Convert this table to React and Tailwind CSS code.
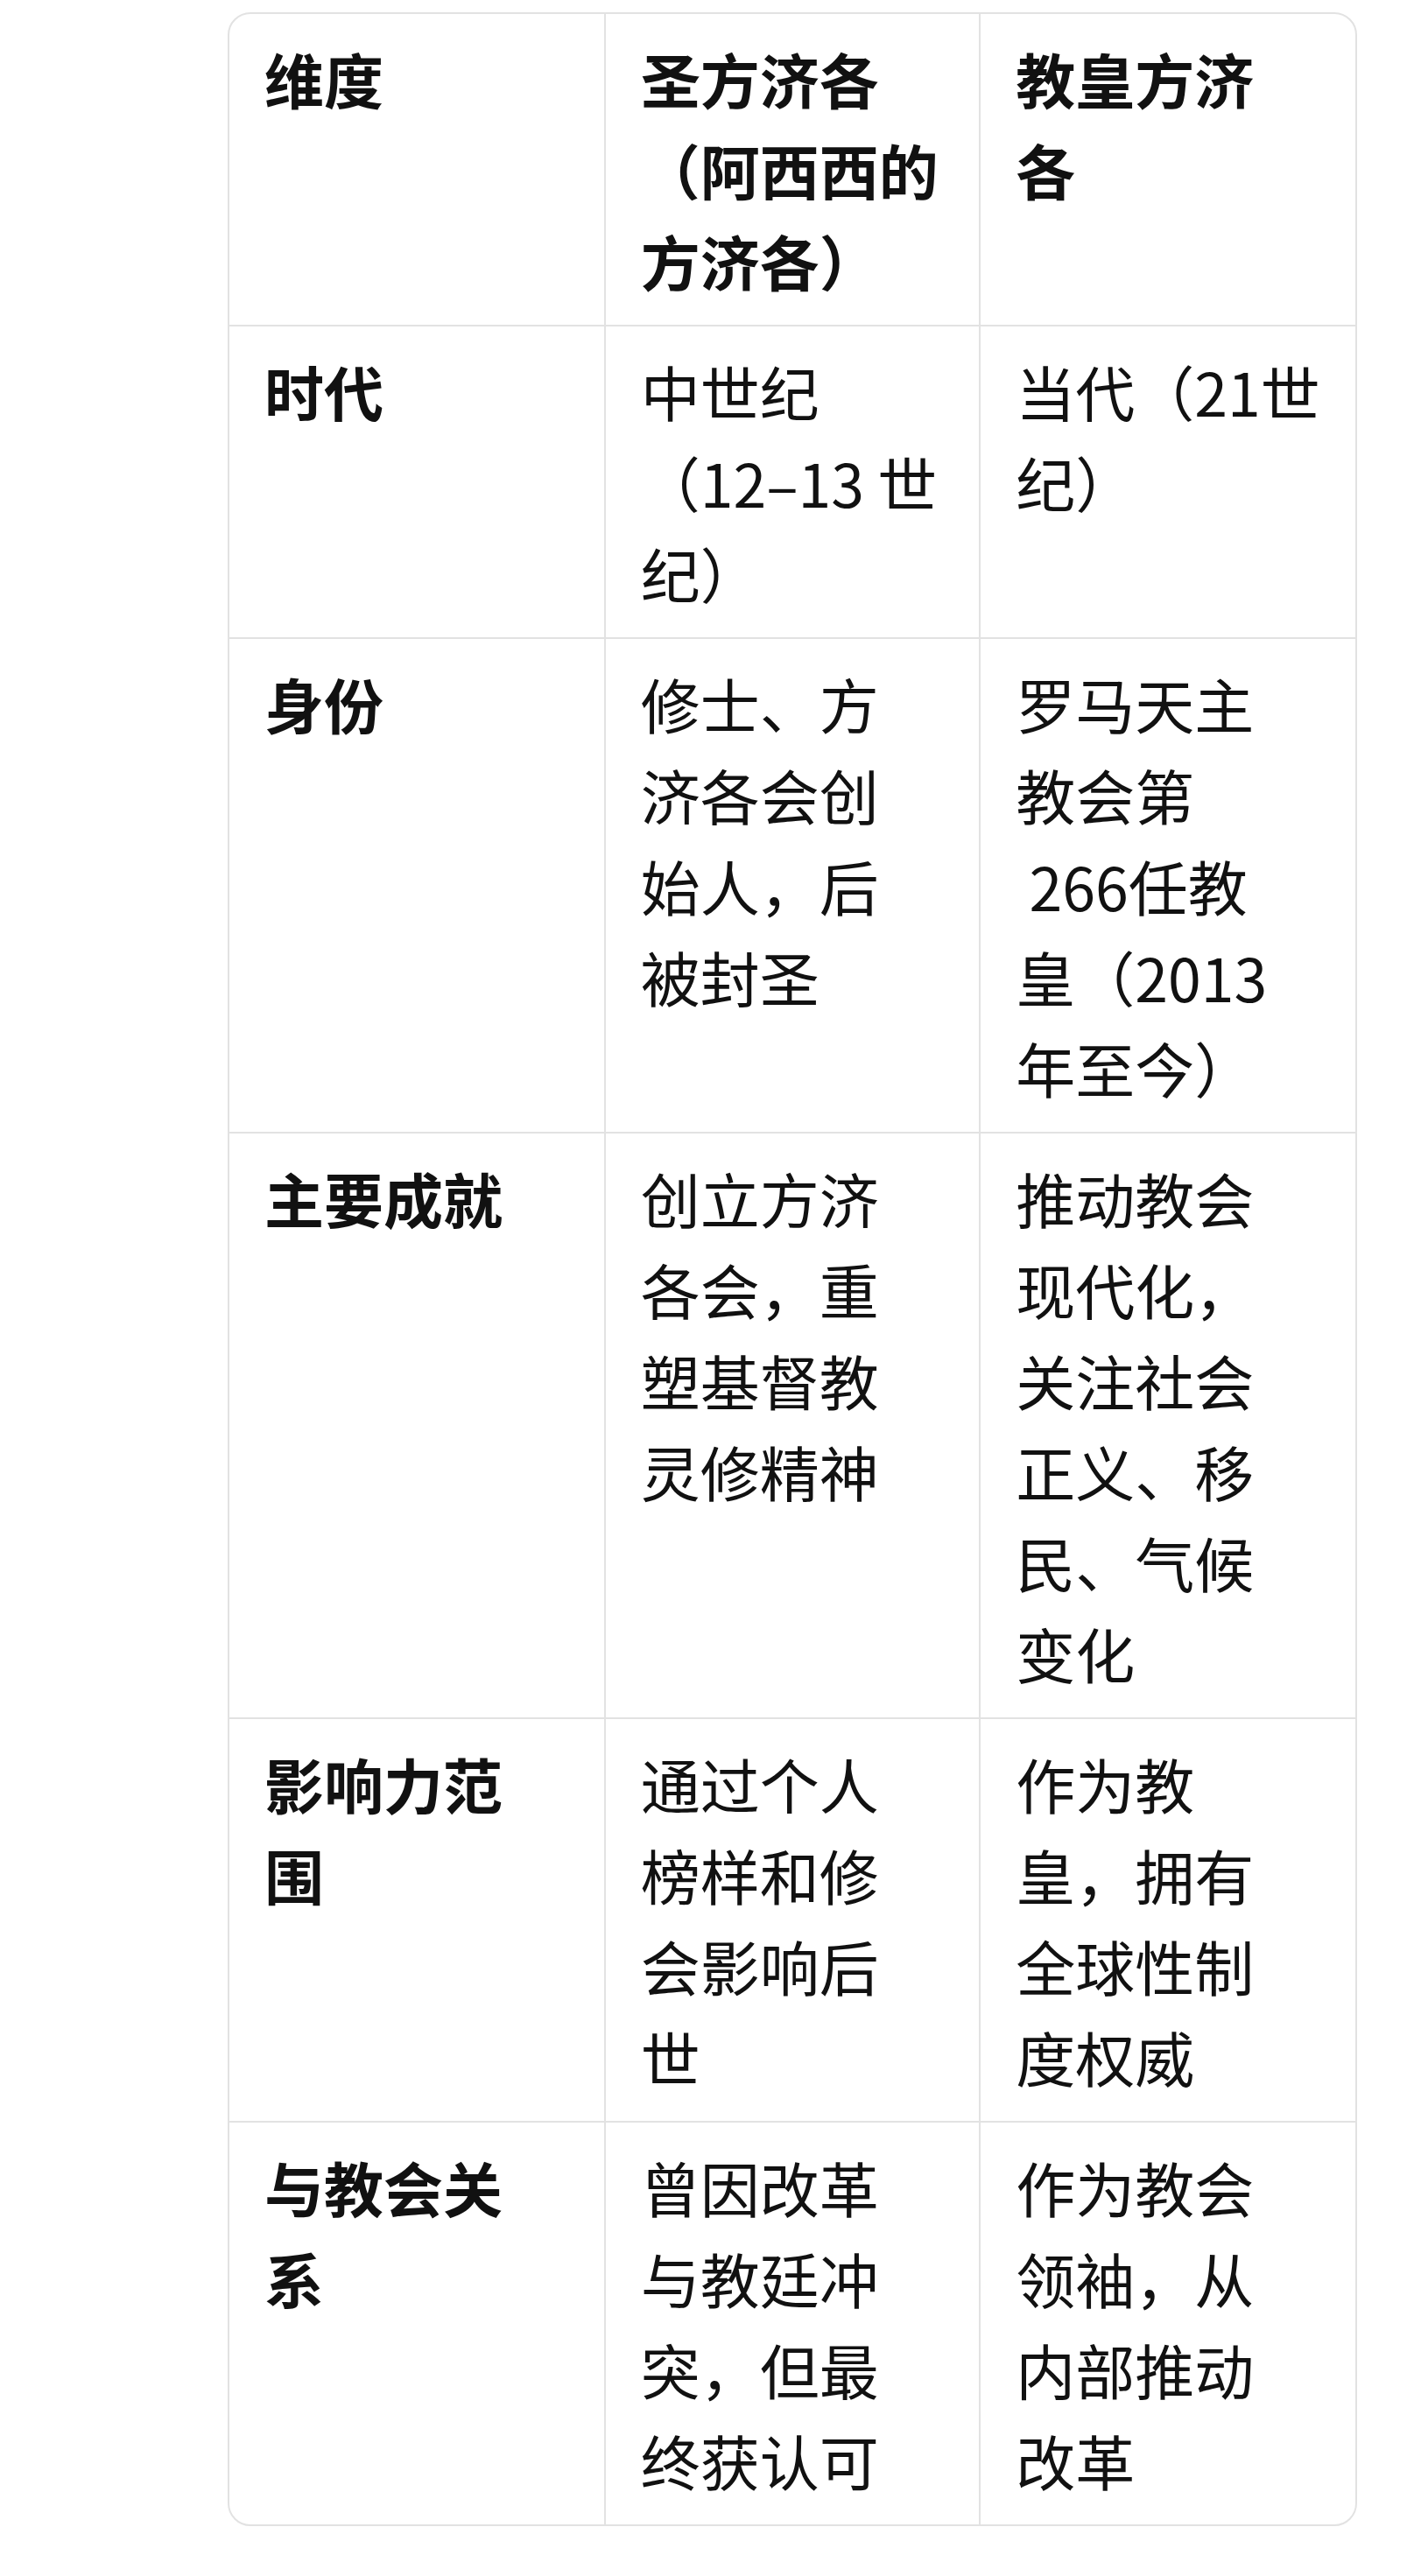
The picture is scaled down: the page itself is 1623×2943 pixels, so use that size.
import React from 'react';

// comparison table: each cell is a list of lines so the wrapping matches the source
const header = [['维度'], ['圣方济各', '（阿西西的', '方济各）'], ['教皇方济', '各']];

const rows = [
  [['时代'], ['中世纪', '（12–13 世', '纪）'], ['当代（21世', '纪）']],
  [['身份'], ['修士、方', '济各会创', '始人，后', '被封圣'], ['罗马天主', '教会第', ' 266任教', '皇（2013', '年至今）']],
  [['主要成就'], ['创立方济', '各会，重', '塑基督教', '灵修精神'], ['推动教会', '现代化，', '关注社会', '正义、移', '民、气候', '变化']],
  [['影响力范', '围'], ['通过个人', '榜样和修', '会影响后', '世'], ['作为教', '皇，拥有', '全球性制', '度权威']],
  [['与教会关', '系'], ['曾因改革', '与教廷冲', '突，但最', '终获认可'], ['作为教会', '领袖，从', '内部推动', '改革']],
];

const Lines = ({ lines }) =>
  lines.map((l, i) => (
    <div key={i} className="whitespace-pre">
      {l}
    </div>
  ));

export default function App() {
  const all = [header, ...rows];
  return (
    <div
      className="min-h-screen bg-white pt-[14px] pl-[260px] text-[#111111]"
      style={{ fontFamily: '"Noto Sans CJK SC", "Noto Sans", sans-serif' }}
    >
      <div className="w-[1290px] overflow-hidden rounded-[26px] border-2 border-[#e2e2e2]">
        <table className="w-full table-fixed border-collapse">
          <tbody>
            {all.map((row, r) => (
              <tr key={r} className={r < all.length - 1 ? 'border-b-2 border-[#e2e2e2]' : ''}>
                {row.map((cell, c) => (
                  <td
                    key={c}
                    className={
                      'px-[40px] py-[21.5px] align-top text-left text-[68px] leading-[104px] ' +
                      (c < 2 ? 'border-r-2 border-[#e2e2e2] ' : '') +
                      (r === 0 || c === 0 ? 'font-bold' : 'font-normal')
                    }
                  >
                    <Lines lines={cell} />
                  </td>
                ))}
              </tr>
            ))}
          </tbody>
        </table>
      </div>
    </div>
  );
}
